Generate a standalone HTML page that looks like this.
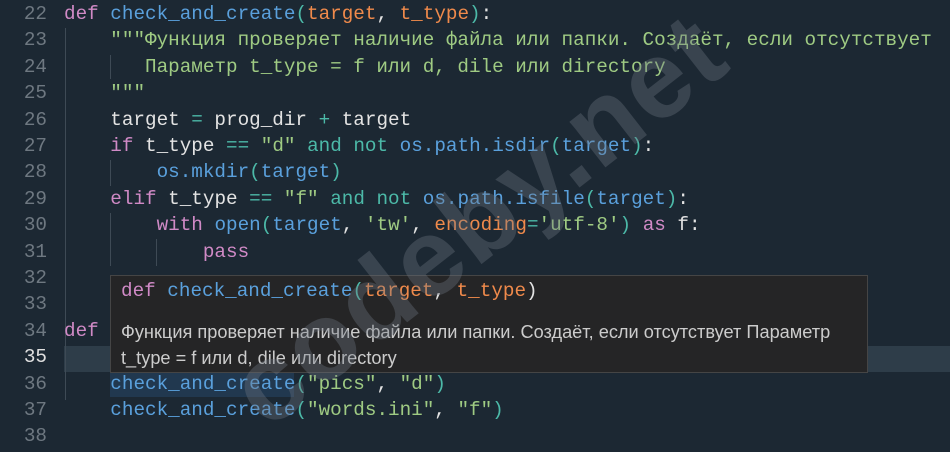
<!DOCTYPE html>
<html><head><meta charset="utf-8">
<style>
html,body{margin:0;padding:0;}
body{width:950px;height:450px;background:#1c2833;position:relative;overflow:hidden;}
.code{position:absolute;left:0;top:1px;font-family:"Liberation Mono","DejaVu Sans Mono",monospace;font-size:19.3px;}
.ln{position:absolute;left:0;width:47px;text-align:right;color:#6e7881;height:26.4px;line-height:26.4px;}
.t{position:absolute;left:64px;white-space:pre;height:26.4px;line-height:26.4px;color:#e3e3e3;}
.k{color:#d08ac6}.f{color:#5aa0dc}.p{color:#f08a4b}.s{color:#9fcb83}.o{color:#4cb9a8}.w{color:#e3e3e3}.b{color:#5aa0dc}
.g{position:absolute;width:1px;background:#3e4a55;}
.hl{position:absolute;left:64px;top:346px;width:886px;height:26px;background:#2e3d49;}
.sel{position:absolute;left:110px;top:372px;width:184px;height:25px;background:#21384f;}
.wm{position:absolute;left:205px;top:352px;font-family:"Liberation Sans",sans-serif;font-weight:bold;font-size:110px;color:rgba(110,120,130,0.36);transform:rotate(-38deg);transform-origin:0 0;white-space:nowrap;letter-spacing:2px;z-index:5;}
.tip{position:absolute;left:110px;top:275px;width:756px;height:96px;background:#252526;border:1px solid #454545;}
.tip .h{position:absolute;left:10px;top:4px;font-family:"Liberation Mono",monospace;font-size:19.3px;white-space:pre;}
.tip .d{position:absolute;left:10px;top:43px;font-family:"Liberation Sans","Noto Sans CJK SC",sans-serif;font-size:18.2px;line-height:26px;color:#cccccc;width:740px;}
</style></head><body>
<div class="hl"></div>
<div class="sel"></div>
<div class="g" style="left:65px;top:28px;height:372px"></div>
<div class="g" style="left:110px;top:55px;height:24px"></div>
<div class="g" style="left:110px;top:160px;height:26px"></div>
<div class="g" style="left:110px;top:213px;height:53px"></div>
<div class="g" style="left:156px;top:239px;height:27px"></div>
<div class="code">
<div class="ln" style="top:0">22</div><div class="t" style="top:0"><span class="k">def</span> <span class="f">check_and_create</span><span class="o">(</span><span class="p">target</span>, <span class="p">t_type</span><span class="o">)</span>:</div>
<div class="ln" style="top:26.4px">23</div><div class="t" style="top:26.4px">    <span class="s">"""Функция проверяет наличие файла или папки. Создаёт, если отсутствует</span></div>
<div class="ln" style="top:52.8px">24</div><div class="t" style="top:52.8px"><span class="s">       Параметр t_type = f или d, dile или directory</span></div>
<div class="ln" style="top:79.2px">25</div><div class="t" style="top:79.2px">    <span class="s">"""</span></div>
<div class="ln" style="top:105.6px">26</div><div class="t" style="top:105.6px">    target <span class="o">=</span> prog_dir <span class="o">+</span> target</div>
<div class="ln" style="top:132px">27</div><div class="t" style="top:132px">    <span class="k">if</span> t_type <span class="o">==</span> <span class="s">"d"</span> <span class="o">and not</span> <span class="b">os.path.isdir</span><span class="o">(</span><span class="b">target</span><span class="o">)</span>:</div>
<div class="ln" style="top:158.4px">28</div><div class="t" style="top:158.4px">        <span class="b">os.mkdir</span><span class="o">(</span><span class="b">target</span><span class="o">)</span></div>
<div class="ln" style="top:184.8px">29</div><div class="t" style="top:184.8px">    <span class="k">elif</span> t_type <span class="o">==</span> <span class="s">"f"</span> <span class="o">and not</span> <span class="b">os.path.isfile</span><span class="o">(</span><span class="b">target</span><span class="o">)</span>:</div>
<div class="ln" style="top:211.2px">30</div><div class="t" style="top:211.2px">        <span class="k">with</span> <span class="b">open</span><span class="o">(</span><span class="b">target</span>, <span class="s">'tw'</span>, <span class="p">encoding</span><span class="o">=</span><span class="s">'utf-8'</span><span class="o">)</span> <span class="k">as</span> f:</div>
<div class="ln" style="top:237.6px">31</div><div class="t" style="top:237.6px">            <span class="k">pass</span></div>
<div class="ln" style="top:264px">32</div>
<div class="ln" style="top:290.4px">33</div>
<div class="ln" style="top:316.8px">34</div><div class="t" style="top:316.8px"><span class="k">def</span></div>
<div class="ln" style="top:343.2px;color:#e0e0e0">35</div>
<div class="ln" style="top:369.6px">36</div><div class="t" style="top:369.6px">    <span class="f">check_and_create</span><span class="o">(</span><span class="s">"pics"</span>, <span class="s">"d"</span><span class="o">)</span></div>
<div class="ln" style="top:396px">37</div><div class="t" style="top:396px">    <span class="f">check_and_create</span><span class="o">(</span><span class="s">"words.ini"</span>, <span class="s">"f"</span><span class="o">)</span></div>
<div class="ln" style="top:422.4px">38</div>
</div>
<div class="tip">
<div class="h"><span class="k">def</span> <span class="f">check_and_create</span><span class="o">(</span><span class="p">target</span><span class="w">, </span><span class="p">t_type</span><span class="w">)</span></div>
<div class="d">Функция проверяет наличие файла или папки. Создаёт, если отсутствует Параметр t_type = f или d, dile или directory</div>
</div>
<div class="wm">codeby.net</div>
</body></html>
